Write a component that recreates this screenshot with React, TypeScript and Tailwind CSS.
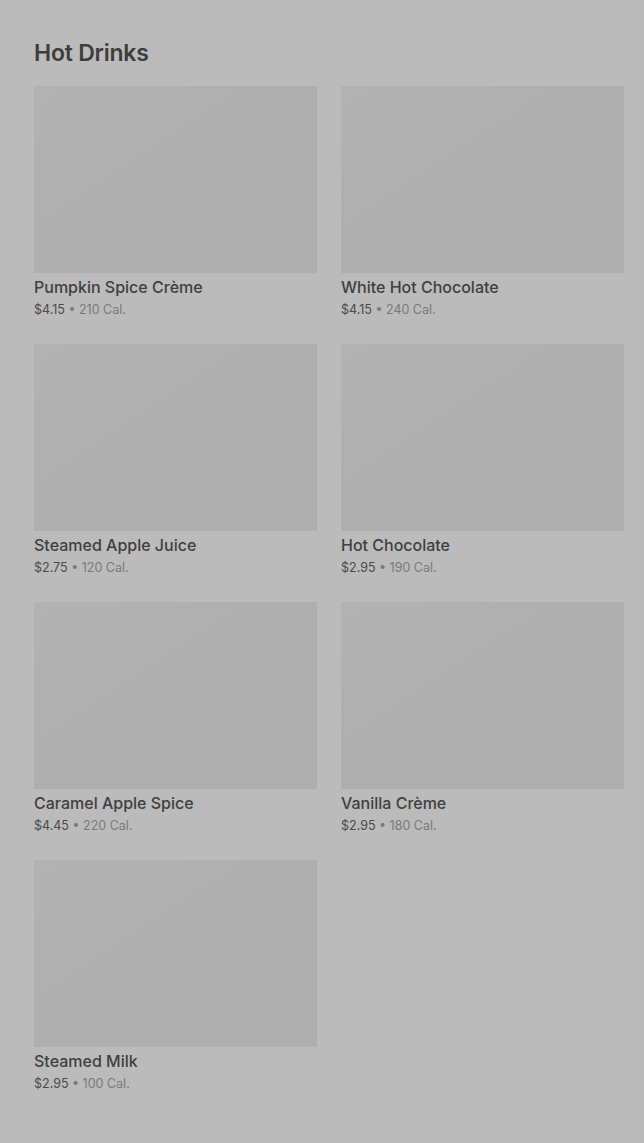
import React from "react";

const items = [
  { name: "Pumpkin Spice Crème", price: "$4.15", cal: "210 Cal." },
  { name: "White Hot Chocolate", price: "$4.15", cal: "240 Cal." },
  { name: "Steamed Apple Juice", price: "$2.75", cal: "120 Cal." },
  { name: "Hot Chocolate", price: "$2.95", cal: "190 Cal." },
  { name: "Caramel Apple Spice", price: "$4.45", cal: "220 Cal." },
  { name: "Vanilla Crème", price: "$2.95", cal: "180 Cal." },
  { name: "Steamed Milk", price: "$2.95", cal: "100 Cal." },
];

export default function App() {
  return (
    <div
      className="min-h-[1143px] w-full bg-[#bbbbbb] pl-[34px] pr-[20px] pt-[40px] pb-[40px]"
      style={{ fontFamily: "Inter, 'Noto Sans', sans-serif" }}
    >
      <h2 className="text-[23px] leading-[26px] font-semibold tracking-[-0.01em] text-[#3d3d3d]">
        Hot Drinks
      </h2>
      <div className="mt-[20px] grid grid-cols-[283px_283px] gap-x-[24px] gap-y-[25px]">
        {items.map((it) => (
          <div key={it.name} className="flex flex-col">
            <div className="h-[187px] w-full bg-gradient-to-br from-[#b2b2b2] via-[#afafaf] to-[#afafaf]" />
            <div className="mt-[4px] text-[16px] leading-[20px] font-medium text-[#3f3f3f]">
              {it.name}
            </div>
            <div className="mt-[4px] text-[12.5px] leading-[18px] text-[#7a7a7a]">
              <span className="text-[#4a4a4a]">{it.price}</span>
              <span> • {it.cal}</span>
            </div>
          </div>
        ))}
      </div>
    </div>
  );
}
